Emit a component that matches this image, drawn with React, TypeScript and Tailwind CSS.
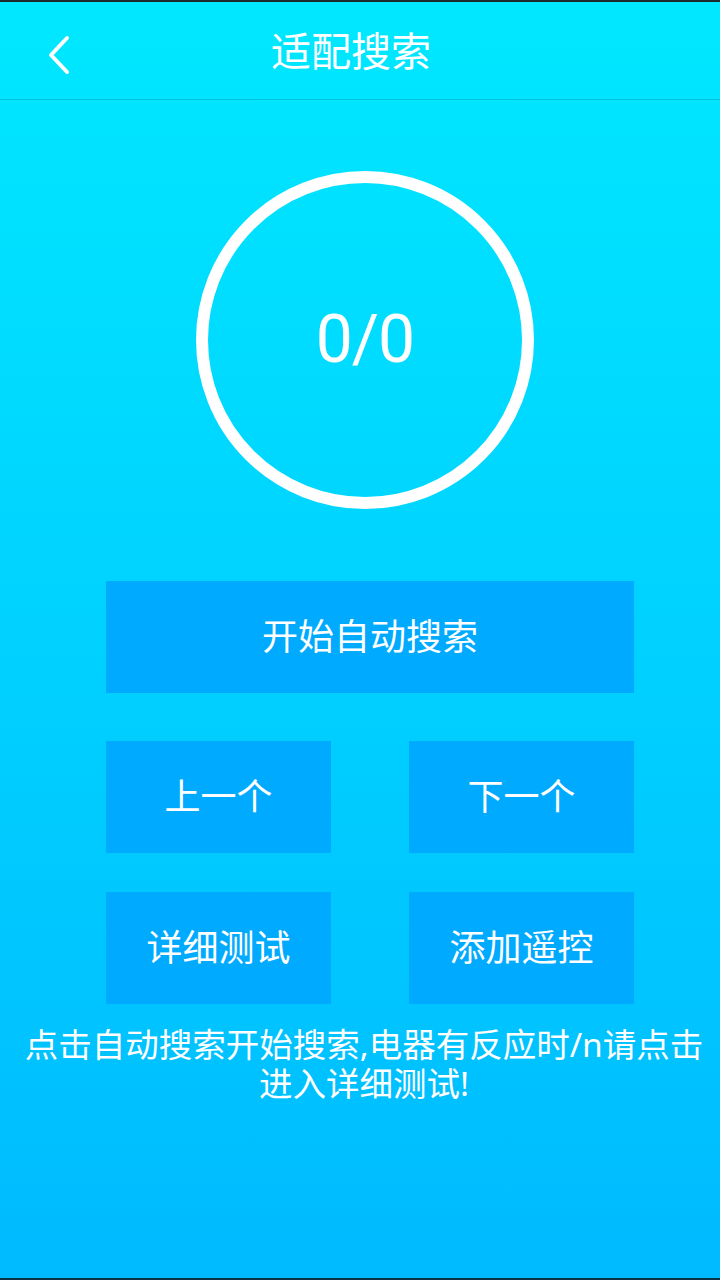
import React from "react";

const font = { fontFamily: '"Noto Sans", "Noto Sans CJK SC", sans-serif' };

const Btn = ({ label, className = "" }: { label: string; className?: string }) => (
  <button
    className={`h-[112px] bg-[#00aaff] text-white text-[36px] flex items-center justify-center ${className}`}
  >
    {label}
  </button>
);

const App = () => {
  return (
    <div
      className="w-[720px] h-[1280px] flex flex-col bg-gradient-to-b from-[#00e8ff] to-[#00baff] text-white"
      style={font}
    >
      <div className="h-[2px] bg-[#1c2a30]" />

      {/* Header */}
      <header className="h-[98px] flex items-center relative border-b border-[#00c2d6]">
        <button className="absolute left-[44px] top-[32px] w-[30px] h-[42px] flex items-center justify-center">
          <svg width="26" height="40" viewBox="0 0 26 40" fill="none">
            <path d="M21 3 L5 20 L21 37" stroke="white" strokeWidth="4" strokeLinecap="round" strokeLinejoin="round" />
          </svg>
        </button>
        <h1 className="w-full text-center text-[40px] leading-none pr-[18px]">适配搜索</h1>
      </header>

      {/* Counter */}
      <div className="flex justify-center mt-[71px] pl-[10px]">
        <div className="w-[338px] h-[338px] rounded-full border-[12px] border-white flex items-center justify-center">
          <span className="text-[66px] leading-none tracking-[-1px]" style={{ fontFamily: '"Roboto", "Noto Sans", sans-serif' }}>
            0/0
          </span>
        </div>
      </div>

      {/* Actions */}
      <div className="flex flex-col mt-[72px] ml-[106px] w-[528px]">
        <Btn label="开始自动搜索" />
        <div className="flex justify-between mt-[48px]">
          <Btn label="上一个" className="w-[225px]" />
          <Btn label="下一个" className="w-[225px]" />
        </div>
        <div className="flex justify-between mt-[39px]">
          <Btn label="详细测试" className="w-[225px]" />
          <Btn label="添加遥控" className="w-[225px]" />
        </div>
      </div>

      <p className="mt-[21px] pl-[14px] pr-[6px] text-center text-[33.5px] leading-[39px]">
        点击自动搜索开始搜索,电器有反应时/n请点击进入详细测试!
      </p>

      <div className="flex-1" />
      <div className="h-[2px] bg-[#0b3344]" />
    </div>
  );
};

export default App;
